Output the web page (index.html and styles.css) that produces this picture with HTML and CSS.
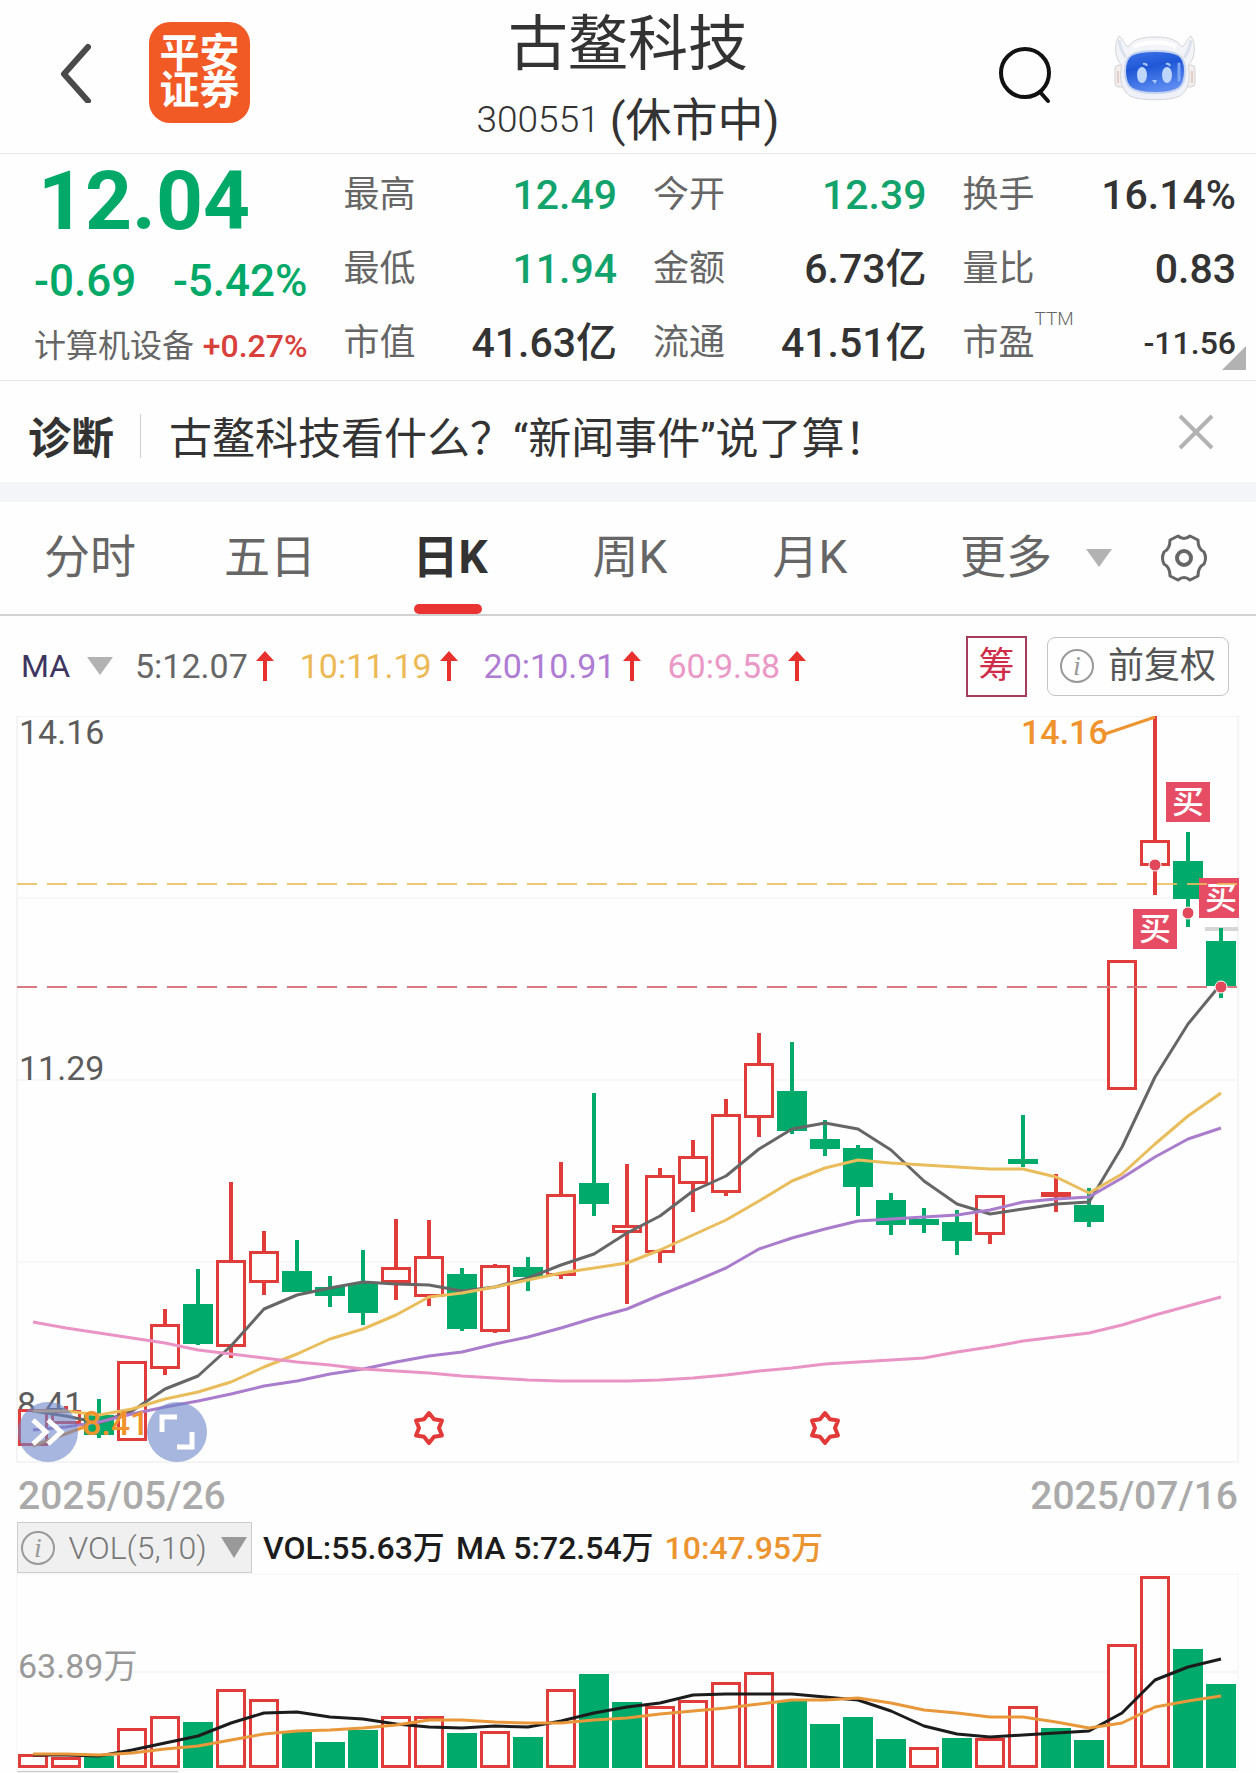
FILE: index.html
```html
<!DOCTYPE html>
<html lang="zh-CN">
<head>
<meta charset="utf-8">
<meta name="viewport" content="width=device-width, initial-scale=1">
<title>古鳌科技 300551</title>
<link rel="stylesheet" href="styles.css">
</head>
<body>
<header class="topbar">
  <div class="topbar-left">
    <button class="icon-btn" aria-label="返回">
      <svg width="32" height="60" viewBox="0 0 32 60"><path d="M28 4 4 31 28 58" fill="none" stroke="#4a4a4a" stroke-width="6" stroke-linecap="round" stroke-linejoin="round"/></svg>
    </button>
    <a class="logo" href="#"><span>平安</span><span>证券</span></a>
  </div>
  <div class="topbar-title">
    <h1>古鳌科技</h1>
    <p><span class="code">300551</span><span>(休市中)</span></p>
  </div>
  <div class="topbar-right">
    <button class="icon-btn" aria-label="搜索">
      <svg width="54" height="60" viewBox="0 0 54 60"><circle cx="27" cy="29" r="24" fill="none" stroke="#111" stroke-width="4"/><path d="m42 48 8 9" stroke="#111" stroke-width="4" stroke-linecap="round"/></svg>
    </button>
    <button class="icon-btn" aria-label="智能助手">
      <svg width="82" height="66" viewBox="0 0 82 66">
        <defs>
          <linearGradient id="face" x1="0" y1="0" x2="0.3" y2="1"><stop offset="0" stop-color="#3f74e8"/><stop offset="0.45" stop-color="#1f57d6"/><stop offset="1" stop-color="#5c8af0"/></linearGradient>
          <linearGradient id="shell" x1="0" y1="0" x2="0" y2="1"><stop offset="0" stop-color="#f4f5f7"/><stop offset="1" stop-color="#eef1f8"/></linearGradient>
        </defs>
        <rect x="1" y="30" width="12" height="22" rx="4" fill="#f3eeee" stroke="#d5d2d6"/>
        <rect x="69" y="30" width="12" height="22" rx="4" fill="#f3eeee" stroke="#d5d2d6"/>
        <path d="M4 36v12M78 36v12" stroke="#e3cfca" stroke-width="2"/>
        <path d="M8 31C0 22 0 9 5 1c4 2 5 9 9 11C20 3 31 2 41 2s21 1 27 10c4-2 5-9 9-11 5 8 5 21-3 30 3 12 1 24-8 30-9 5-41 5-50 0C7 55 5 43 8 31z" fill="url(#shell)" stroke="#d3d5db" stroke-width="1"/>
        <path d="M5 5c1 8 5 15 7 18M77 5c-1 8-5 15-7 18" fill="none" stroke="#cdd6e6" stroke-width="3" opacity=".6"/>
        <path d="M20 12C29 6 53 6 62 12" fill="none" stroke="#fff" stroke-width="4"/>
        <path d="M41 16c23 0 30 4 30 20s-6 22-30 22-30-6-30-22 7-20 30-20z" fill="url(#face)" stroke="#c4d3f1" stroke-width="2"/>
        <ellipse cx="28" cy="40" rx="5" ry="8" fill="#bdd6fa"/><ellipse cx="53" cy="40" rx="5" ry="8" fill="#bdd6fa"/>
        <path d="M29 29q3-1 4 2M52 29q3-1 4 2" fill="none" stroke="#a9c8f8" stroke-width="2"/>
        <path d="M38 45h5l-2 4z" fill="#a9c8f8"/><path d="M65 29v16" stroke="#7ea6f5" stroke-width="3" stroke-linecap="round"/>
      </svg>
    </button>
  </div>
</header>

<section class="quote">
  <div class="price">
    <strong class="last">12.04</strong>
    <div class="change"><span>-0.69</span><span>-5.42%</span></div>
    <div class="sector"><a href="#">计算机设备</a><span class="up">+0.27%</span></div>
  </div>
  <dl>
    <div><dt>最高</dt><dd class="down">12.49</dd></div>
    <div><dt>最低</dt><dd class="down">11.94</dd></div>
    <div><dt>市值</dt><dd>41.63亿</dd></div>
  </dl>
  <dl>
    <div><dt>今开</dt><dd class="down">12.39</dd></div>
    <div><dt>金额</dt><dd>6.73亿</dd></div>
    <div><dt>流通</dt><dd>41.51亿</dd></div>
  </dl>
  <dl>
    <div><dt>换手</dt><dd>16.14%</dd></div>
    <div><dt>量比</dt><dd>0.83</dd></div>
    <div><dt>市盈<sup>TTM</sup></dt><dd class="small">-11.56</dd></div>
  </dl>
  <span class="corner"></span>
</section>

<section class="notice">
  <b>诊断</b>
  <a href="#">古鳌科技看什么？“新闻事件”说了算！</a>
  <button class="icon-btn" aria-label="关闭">
    <svg width="36" height="36" viewBox="0 0 36 36"><path d="m2 2 32 32M34 2 2 34" stroke="#b2b2b2" stroke-width="4"/></svg>
  </button>
</section>

<nav class="tabs">
  <button>分时</button>
  <button>五日</button>
  <button class="active">日K</button>
  <button>周K</button>
  <button>月K</button>
  <label class="more"><select aria-label="更多周期"><option>更多</option></select><i class="tri"></i></label>
  <button class="gear" aria-label="设置">
    <svg width="50" height="50" viewBox="0 0 50 50"><path d="M19 3q6 5 12 0l8 4q0 9 6 12 3 6 0 12-6 3-6 12l-8 4q-6-5-12 0l-8-4q0-9-6-12-3-6 0-12 6-3 6-12z" fill="none" stroke="#666" stroke-width="3" stroke-linejoin="round"/><circle cx="25" cy="25" r="7" fill="none" stroke="#666" stroke-width="4"/></svg>
  </button>
</nav>

<section class="ma-row">
  <label class="ma-pick"><select aria-label="主图指标"><option>MA</option></select><i class="tri"></i></label>
  <span class="ma ma5">5:12.07<svg class="arrow" viewBox="0 0 18 30"><path d="M9 0 18 10H11V30H7V10H0z"/></svg></span>
  <span class="ma ma10">10:11.19<svg class="arrow" viewBox="0 0 18 30"><path d="M9 0 18 10H11V30H7V10H0z"/></svg></span>
  <span class="ma ma20">20:10.91<svg class="arrow" viewBox="0 0 18 30"><path d="M9 0 18 10H11V30H7V10H0z"/></svg></span>
  <span class="ma ma60">60:9.58<svg class="arrow" viewBox="0 0 18 30"><path d="M9 0 18 10H11V30H7V10H0z"/></svg></span>
  <button class="chip">筹</button>
  <button class="adjust"><i class="info">i</i>前复权</button>
</section>

<div class="stage">
  <svg id="kline" class="plot" viewBox="0 0 1256 747" role="img" aria-label="日K线图"></svg>
  <button class="round expand" aria-label="展开">
    <svg width="34" height="28" viewBox="0 0 34 28"><path d="m2 2 13 12L2 26M17 2l13 12-13 12" fill="none" stroke="#fff" stroke-width="5"/></svg>
  </button>
  <button class="round full" aria-label="全屏">
    <svg width="36" height="36" viewBox="0 0 36 36"><path d="M3 18V3h15M33 18v15H18" fill="none" stroke="#fff" stroke-width="5"/></svg>
  </button>
</div>
<div class="dates"><time>2025/05/26</time><time>2025/07/16</time></div>

<section class="vol-row">
  <label class="vol-pick"><i class="info">i</i><select aria-label="副图指标"><option>VOL(5,10)</option></select><i class="tri"></i></label>
  <span>VOL:55.63万</span><span>MA 5:72.54万</span><em>10:47.95万</em>
</section>
<svg id="volume" class="plot" viewBox="0 0 1256 198" role="img" aria-label="成交量图"></svg>
<div class="next-pick"></div>
<script src="chart.js"></script>
</body>
</html>
```
FILE: styles.css
```css
* { box-sizing: border-box; }
body { margin: 0; background: #fefefe; color: #333; font-family: Roboto, "Noto Sans CJK SC", sans-serif; line-height: 1.25; }
h1, p, dl, dd { margin: 0; font-weight: 400; }
a { color: inherit; text-decoration: none; }
button, select { padding: 0; border: 0; background: none; color: inherit; font: inherit; }
select { appearance: none; }
svg { display: block; }
.icon-btn { flex: none; }

.topbar { display: grid; grid-template-columns: 1fr auto 1fr; height: 154px; border-bottom: 1px solid #e8e8e8; }
.topbar-left { display: flex; align-items: center; gap: 57px; padding: 0 0 8px 60px; }
.logo { display: flex; flex-direction: column; align-items: center; width: 101px; height: 101px; padding-top: 13px; border-radius: 21px; background: #f15a24; color: #fff; font-size: 40px; line-height: 37px; font-weight: 700; }
.topbar-title { text-align: center; }
.topbar-title h1 { padding-top: 3px; font-size: 60px; line-height: 84px; }
.topbar-title p { display: flex; align-items: center; justify-content: center; gap: 10px; font-size: 46px; line-height: 66px; }
.topbar-title .code { font-size: 37px; font-weight: 300; }
.topbar-right { display: flex; align-items: flex-start; justify-content: flex-end; gap: 62px; padding: 35px 60px 0 0; }
.topbar-right .icon-btn:first-child { padding-top: 9px; }

.quote { position: relative; display: grid; grid-template-columns: repeat(4, 1fr); column-gap: 36px; height: 227px; padding: 4px 20px 0 34px; border-bottom: 1px solid #e6e6e6; }
.price { color: #00a968; font-weight: 500; }
.last { display: block; padding-left: 4px; font-size: 82px; line-height: 86px; font-weight: 700; }
.change { display: flex; justify-content: space-between; padding-top: 2px; font-size: 44px; line-height: 70px; }
.sector { display: flex; justify-content: space-between; align-items: center; color: #666; font-size: 32px; line-height: 60px; font-weight: 400; }
.sector .up { color: #d8403c; font-weight: 500; }
.quote dl > div { display: flex; align-items: center; justify-content: space-between; height: 74px; }
.quote dt, .quote dd { line-height: 74px; white-space: nowrap; }
.quote dt { color: #666; font-size: 36px; }
.quote dt sup { font-size: 19px; font-weight: 300; line-height: 20px; vertical-align: 30px; }
.quote dd { font-size: 41px; font-weight: 500; }
.quote .down { color: #12a36c; }
.quote .small { font-size: 32px; }
.corner { position: absolute; right: 10px; bottom: 10px; width: 24px; height: 24px; background: #b2b2b2; clip-path: polygon(100% 0, 100% 100%, 0 100%); }

.notice { display: flex; align-items: center; height: 121px; padding: 0 42px 0 28px; border-bottom: 20px solid #f3f5f9; font-size: 43px; }
.notice b, .notice a { padding-top: 14px; line-height: 60px; }
.notice b { padding-right: 26px; }
.notice a { position: relative; flex: 1; padding-left: 29px; }
.notice a::before { content: ""; position: absolute; left: 0; top: 19px; height: 44px; border-left: 1px solid #ccc; }

.tabs { display: grid; grid-template-columns: 180fr 180fr 180fr 180fr 180fr 212fr 144fr; height: 114px; border-bottom: 2px solid #d2d2d2; color: #666; font-size: 46px; }
.tabs .active { position: relative; color: #333; font-weight: 700; }
.tabs .active::after { content: ""; position: absolute; left: 50%; bottom: 0; width: 68px; height: 10px; margin-left: -36px; border-radius: 5px; background: #ea3434; }
.more { display: flex; align-items: center; justify-content: flex-end; gap: 34px; }
.tri { flex: none; width: 26px; height: 18px; background: #b2b2b2; clip-path: polygon(0 0, 100% 0, 50% 100%); }
.gear { display: flex; align-items: center; justify-content: center; }

.ma-row { display: flex; align-items: center; height: 100px; padding: 0 27px 0 21px; font-size: 34px; }
.ma-pick { display: flex; align-items: center; gap: 16px; margin-right: 22px; color: #3d3560; font-size: 32px; }
.ma { display: flex; align-items: center; gap: 8px; margin-right: 26px; }
.arrow { width: 18px; height: 30px; fill: #e8302c; }
.ma5 { color: #666; }
.ma10 { color: #ecb955; }
.ma20 { color: #ae7cd2; }
.ma60 { color: #ea98c6; }
.chip { width: 61px; height: 61px; margin-left: auto; border: 2px solid #a53e5c; color: #ce2c48; font-size: 36px; }
.adjust { display: flex; align-items: center; justify-content: center; gap: 14px; width: 182px; height: 59px; margin-left: 20px; border: 1px solid #c4c4c4; border-radius: 8px; color: #555; font-size: 36px; white-space: nowrap; }
.info { flex: none; width: 34px; height: 34px; border: 2px solid #999; border-radius: 50%; color: #999; font: italic 28px/30px "Liberation Serif", serif; text-align: center; }

.stage { position: relative; }
.plot { width: 100%; height: auto; font-size: 34px; }
.round { position: absolute; bottom: 1px; display: flex; align-items: center; justify-content: center; width: 60px; height: 60px; border-radius: 50%; background: rgba(106, 134, 201, 0.6); }
.expand { left: 18px; }
.full { left: 147px; }
.dates { display: flex; justify-content: space-between; padding: 7px 18px 0; color: #aaa; font-size: 39px; line-height: 52px; font-weight: 500; }

.vol-row { display: flex; align-items: center; gap: 11px; height: 51px; padding-left: 17px; color: #1c1c1c; font-size: 32px; font-weight: 500; white-space: nowrap; }
.vol-row em { color: #ec9430; font-style: normal; }
.vol-pick { display: flex; align-items: center; justify-content: space-between; width: 235px; height: 51px; padding: 0 4px 0 3px; border: 1px solid #ccc; background: #f0f0f0; color: #777; font-weight: 300; }
.vol-pick .tri { height: 21px; background: #999; }
.next-pick { width: 161px; height: 2px; margin-left: 17px; border-top: 1px solid #ccc; background: #f0f0f0; }

.axis { fill: #5c5c5c; }
.axis-vol { fill: #999; }
.peak { fill: #f0932c; font-weight: 500; }
.badge-text { fill: #fff; font-size: 32px; font-weight: 500; }
```
FILE: chart.js
```js
const RED = '#e03c3a', GREEN = '#00aa6b', STEP = 33, HALF = 15, TOP = 716;

// direction, body top, body bottom, wick top, wick bottom
const candles = [
  ['r',1409,1446,1409,1446],['r',1410,1424,1406,1424],['g',1415,1435,1399,1438],['r',1361,1441,1361,1441],
  ['r',1324,1369,1309,1375],['g',1304,1344,1269,1345],['r',1260,1347,1182,1358],['r',1251,1283,1231,1295],
  ['g',1271,1292,1240,1292],['g',1287,1296,1276,1307],['g',1283,1313,1250,1325],['r',1267,1283,1219,1300],
  ['r',1256,1297,1220,1306],['g',1274,1329,1268,1331],['r',1265,1332,1264,1333],['g',1267,1277,1257,1291],
  ['r',1194,1276,1162,1279],['g',1183,1204,1093,1216],['r',1225,1233,1164,1304],['r',1175,1253,1168,1263],
  ['r',1156,1184,1140,1212],['r',1114,1193,1099,1196],['r',1063,1118,1033,1137],['g',1091,1131,1042,1134],
  ['g',1139,1149,1120,1156],['g',1148,1187,1145,1216],['g',1200,1225,1193,1235],['g',1219,1225,1208,1233],
  ['g',1222,1241,1210,1255],['r',1195,1235,1195,1244],['g',1159,1164,1115,1167],['r',1192,1197,1174,1212],
  ['g',1205,1222,1188,1227],['r',960,1090,960,1090],['r',840,866,716,895],['g',861,899,832,927],['g',941,986,928,998]
];
const averages = [
  ['#666', [1411,1416,1423,1411,1389,1376,1346,1309,1295,1288,1282,1284,1285,1291,1287,1278,1265,1254,1233,1216,1191,1176,1149,1129,1123,1129,1150,1181,1204,1214,1209,1204,1202,1147,1077,1024,984]],
  ['#eabd5c', [1411,1411,1415,1409,1399,1392,1382,1367,1354,1339,1329,1315,1297,1293,1287,1280,1273,1268,1263,1250,1235,1220,1201,1181,1168,1160,1163,1165,1167,1169,1169,1177,1193,1174,1144,1116,1093]],
  ['#aa7ccc', [1430,1427,1422,1414,1407,1401,1394,1386,1381,1374,1369,1362,1356,1352,1344,1337,1328,1318,1309,1295,1282,1268,1249,1238,1229,1221,1219,1217,1215,1210,1202,1199,1197,1178,1157,1139,1128]],
  ['#e994c4', [1322,1328,1333,1338,1343,1350,1354,1358,1362,1365,1369,1371,1373,1376,1378,1380,1381,1381,1381,1380,1378,1375,1371,1368,1364,1362,1360,1358,1352,1347,1341,1337,1333,1325,1315,1306,1297]]
];
const volumeColors = 'rrgrrgrrgggrrgrgrggrrrrggggrgrrggrrgg';
const volumeTops = [1754,1757,1756,1728,1716,1722,1689,1699,1731,1742,1730,1716,1716,1733,1731,1737,1689,1674,1702,1706,1700,1682,1672,1701,1724,1717,1739,1747,1738,1738,1706,1728,1740,1644,1576,1649,1684];
const volumeAverages = [
  ['#1c1c1c', [1755,1755,1756,1750,1743,1736,1723,1713,1712,1717,1719,1724,1727,1728,1726,1727,1721,1713,1707,1703,1695,1694,1694,1694,1697,1700,1711,1726,1734,1737,1735,1733,1731,1713,1680,1667,1659]],
  ['#e8983a', [1754,1754,1755,1753,1749,1746,1740,1734,1731,1730,1728,1725,1720,1720,1722,1723,1723,1720,1718,1714,1711,1708,1704,1700,1700,1698,1703,1710,1713,1717,1717,1722,1728,1723,1707,1701,1696]]
];

const xAt = i => STEP * (i + 1);
const rect = (x, y, w, h, attrs) => `<rect x="${x}" y="${y}" width="${w}" height="${h}" ${attrs}/>`;
const line = (x1, y1, x2, y2, color, width, extra = '') =>
  `<path d="M${x1} ${y1}L${x2} ${y2}" stroke="${color}" stroke-width="${width}" ${extra}/>`;
const curve = ([color, ys], width) =>
  `<polyline points="${ys.map((y, i) => xAt(i) + ',' + y).join(' ')}" fill="none" stroke="${color}" stroke-width="${width}" stroke-linejoin="round"/>`;

function hollow(x, top, bottom, w) {
  return rect(x - HALF + w / 2, top + w / 2, 2 * HALF - w, Math.max(bottom - top - w, 1), `fill="#fefefe" stroke="${RED}" stroke-width="${w}"`);
}
function candle([dir, top, bottom, high, low], i) {
  const x = xAt(i), color = dir === 'r' ? RED : GREEN;
  const body = dir === 'r' ? hollow(x, top, bottom, 3) : rect(x - HALF, top, 2 * HALF, bottom - top, `fill="${GREEN}"`);
  return line(x, high, x, low, color, 4) + body;
}
const star = x => {
  const pts = Array.from({ length: 12 }, (_, k) => {
    const r = k % 2 ? 10 : 15, a = Math.PI * (k / 6 - 0.5);
    return (x + r * Math.cos(a)).toFixed(1) + ',' + (1428 + r * Math.sin(a)).toFixed(1);
  });
  return `<polygon points="${pts.join(' ')}" fill="#fefefe" stroke="#e23a38" stroke-width="4" stroke-linejoin="round"/>`;
};
const dot = (x, y) => `<circle cx="${x}" cy="${y}" r="6" fill="#e2485c" stroke="#fff" stroke-width="1"/>`;
const badge = (x, y, w) => rect(x, y, w, 40, 'fill="#e64d64"') + `<text class="badge-text" x="${x + 6}" y="${y + 31}">买</text>`;

let k = rect(17, 716, 1221, 746, 'fill="none" stroke="#f4f4f4" stroke-width="2"');
[898, 1080, 1262].forEach(y => k += line(17, y, 1238, y, '#f6f6f6', 2));
k += '<text class="axis" x="19" y="744">14.16</text><text class="axis" x="19" y="1080">11.29</text><text class="axis" x="17" y="1416">8.41</text>';
k += candles.map(candle).join('');
k += line(1205, 929, 1238, 929, '#d6d6d6', 4) + line(1221, 928, 1221, 942, GREEN, 4);
k += averages.map(a => curve(a, 3)).join('');
k += line(1105, 734, 1155, 717, '#ec9430', 3) + line(33, 1446, 84, 1427, '#ec9430', 3);
k += '<text class="peak" x="1021" y="744">14.16</text><text class="peak" x="82" y="1435">8.41</text>';
k += star(429) + star(825);
k += badge(1166, 782, 44) + badge(1133, 909, 44) + badge(1199, 878, 40);
k += line(17, 884, 1238, 884, '#edbd5e', 2, 'stroke-dasharray="20 10" opacity=".85"');
k += line(17, 987, 1238, 987, '#d97a80', 2, 'stroke-dasharray="20 10"');
k += dot(1155, 865) + dot(1188, 913) + dot(1221, 987);
document.getElementById('kline').innerHTML = `<g transform="translate(0 ${-TOP})">${k}</g>`;

let v = rect(17, 1574, 1221, 196, 'fill="none" stroke="#f4f4f4" stroke-width="1"') + line(17, 1672, 1238, 1672, '#f6f6f6', 2);
v += '<text class="axis-vol" x="18" y="1678">63.89万</text>';
v += volumeTops.map((top, i) => volumeColors[i] === 'r'
  ? hollow(xAt(i), top, 1768, 3)
  : rect(xAt(i) - HALF, top, 2 * HALF, 1768 - top, `fill="${GREEN}"`)).join('');
v += volumeAverages.map(a => curve(a, 3)).join('');
document.getElementById('volume').innerHTML = `<g transform="translate(0 -1573)">${v}</g>`;
```
